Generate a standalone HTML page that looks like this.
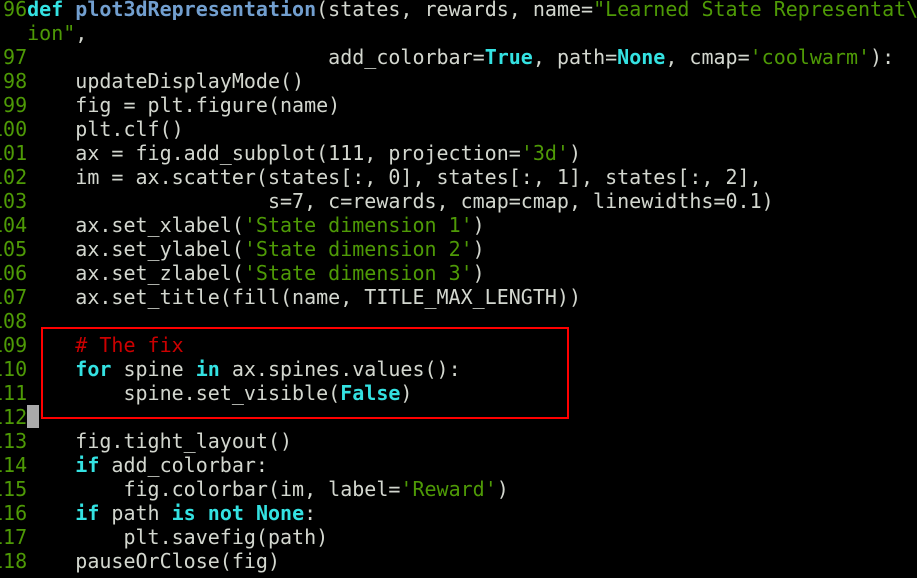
<!DOCTYPE html>
<html><head><meta charset="utf-8"><style>
html,body{margin:0;padding:0;background:#000;width:917px;height:578px;overflow:hidden}
pre{position:absolute;left:-9px;top:-3px;margin:0;font-family:"DejaVu Sans Mono","Liberation Mono",monospace;font-size:20px;line-height:24px;color:#d3d7cf;white-space:pre}
.n{color:#4e9a06}.k{color:#34e2e2;font-weight:bold}.f{color:#729fcf;font-weight:bold}.s{color:#4e9a06}.c{color:#cc0000}
.box{position:absolute;left:41px;top:327px;width:524px;height:88px;border:2px solid #ff0000}
.cur{position:absolute;left:27px;top:405px;width:12px;height:23px;background:#aaa}
</style></head><body>
<pre><span class="n"> 96</span><span class="k">def</span> <span class="f">plot3dRepresentation</span>(states, rewards, name=<span class="s">"Learned State Representat\</span>
<span class="s">   ion"</span>,
<span class="n"> 97</span>                         add_colorbar=<span class="k">True</span>, path=<span class="k">None</span>, cmap=<span class="s">'coolwarm'</span>):
<span class="n"> 98</span>    updateDisplayMode()
<span class="n"> 99</span>    fig = plt.figure(name)
<span class="n">100</span>    plt.clf()
<span class="n">101</span>    ax = fig.add_subplot(111, projection=<span class="s">'3d'</span>)
<span class="n">102</span>    im = ax.scatter(states[:, 0], states[:, 1], states[:, 2],
<span class="n">103</span>                    s=7, c=rewards, cmap=cmap, linewidths=0.1)
<span class="n">104</span>    ax.set_xlabel(<span class="s">'State dimension 1'</span>)
<span class="n">105</span>    ax.set_ylabel(<span class="s">'State dimension 2'</span>)
<span class="n">106</span>    ax.set_zlabel(<span class="s">'State dimension 3'</span>)
<span class="n">107</span>    ax.set_title(fill(name, TITLE_MAX_LENGTH))
<span class="n">108</span>
<span class="n">109</span>    <span class="c"># The fix</span>
<span class="n">110</span>    <span class="k">for</span> spine <span class="k">in</span> ax.spines.values():
<span class="n">111</span>        spine.set_visible(<span class="k">False</span>)
<span class="n">112</span>
<span class="n">113</span>    fig.tight_layout()
<span class="n">114</span>    <span class="k">if</span> add_colorbar:
<span class="n">115</span>        fig.colorbar(im, label=<span class="s">'Reward'</span>)
<span class="n">116</span>    <span class="k">if</span> path <span class="k">is</span> <span class="k">not</span> <span class="k">None</span>:
<span class="n">117</span>        plt.savefig(path)
<span class="n">118</span>    pauseOrClose(fig)</pre>
<div class="box"></div>
<div class="cur"></div>
</body></html>
